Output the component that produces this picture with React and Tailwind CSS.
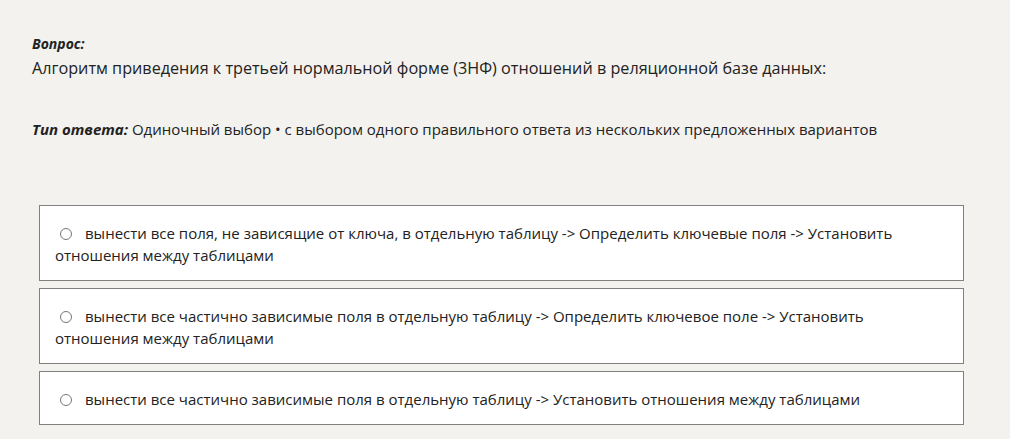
const answers = [
  'вынести все поля, не зависящие от ключа, в отдельную таблицу -> Определить ключевые поля -> Установить отношения между таблицами',
  'вынести все частично зависимые поля в отдельную таблицу -> Определить ключевое поле -> Установить отношения между таблицами',
  'вынести все частично зависимые поля в отдельную таблицу -> Установить отношения между таблицами',
];

export default function App() {
  return (
    <div className="min-h-[439px] bg-[#f3f2ef] font-['Open_Sans',sans-serif] text-[#222222]">
      <div className="pl-[32px] pr-[46px] pt-[34px]">
        <div className="text-[14px] font-bold italic leading-[20px]">Вопрос:</div>
        <div className="mt-[2px] text-[16.2px] leading-[24px]">
          Алгоритм приведения к третьей нормальной форме (3НФ) отношений в реляционной базе данных:
        </div>
        <div className="mt-[38px] text-[15px] leading-[22px]">
          <span className="font-bold italic">Тип ответа:</span> Одиночный выбор • с выбором одного правильного ответа из нескольких предложенных вариантов
        </div>
      </div>
      <div className="ml-[39px] mr-[46px] mt-[65px] flex flex-col gap-[7px]">
        {answers.map((text, i) => (
          <label key={i} className="block border border-[#808080] bg-white px-[15px] pt-[16px] pb-[14px] text-[15px] leading-[22px]">
            <input type="radio" name="answer" className="mr-[13px] ml-[5px] inline-block h-[12px] w-[12px] appearance-none rounded-full border border-[#767676] bg-white align-[-1px]" />
            {text}
          </label>
        ))}
      </div>
    </div>
  );
}
